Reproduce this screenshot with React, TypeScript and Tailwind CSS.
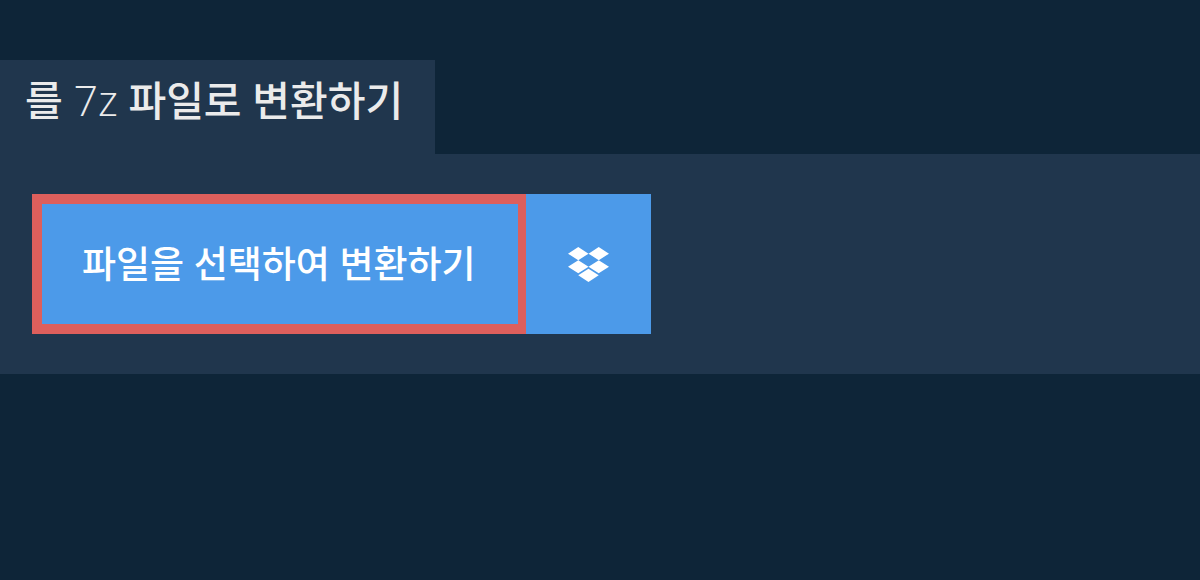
import { FaDropbox } from 'react-icons/fa';

export default function App() {
  return (
    <main className="min-h-screen bg-[#0e2538] pt-15 font-['Open_Sans','Noto_Sans_CJK_KR',sans-serif]">
      <h1 className="w-fit bg-[#20364d] pt-3 pr-8 pb-[26px] pl-[25px] text-[41px] leading-[56px] font-medium text-[#ebebeb]">
        를 <span className="text-[43px] font-light">7z</span> 파일로 변환하기
      </h1>
      <section className="flex bg-[#20364d] px-8 py-10">
        <button
          type="button"
          className="border-10 border-r-8 border-[#dd5f5c] bg-[#4c9ae9] pt-8 pr-[42px] pb-8 pl-10 text-[37px] leading-[56px] font-medium text-white"
        >
          파일을 선택하여 변환하기
        </button>
        <button type="button" aria-label="Dropbox" className="flex w-[125px] items-center justify-center bg-[#4c9ae9] text-white">
          <FaDropbox size={41} />
        </button>
      </section>
    </main>
  );
}
